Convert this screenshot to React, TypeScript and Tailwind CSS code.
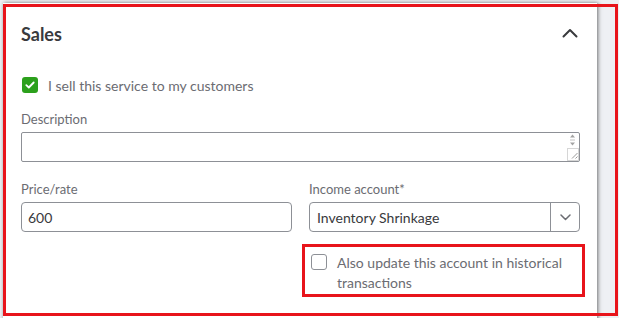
export default function App() {
  return (
    <div className="relative w-[619px] h-[318px] overflow-hidden bg-[#eef0f4] font-['Lato',sans-serif]">
      <div className="ml-[3px] mt-[3px] w-[594px] h-[340px] bg-white shadow-[1px_0_4px_rgba(0,0,0,0.55)] pl-[18px] pr-[17px] pt-[19px]">
        <div className="flex h-[24px] items-center justify-between">
          <span className="text-[18px] font-bold leading-[24px] text-[#393a3d]">Sales</span>
          <svg width="16" height="10" viewBox="0 0 16 10" className="mr-[2px] -mt-[3px]">
            <path d="M1.5 8.5 L8 2 L14.5 8.5" fill="none" stroke="#393a3d" strokeWidth="2" strokeLinecap="round" strokeLinejoin="round" />
          </svg>
        </div>

        <div className="mt-[27px] flex h-[24px] items-center">
          <div className="ml-[1px] flex h-[16px] w-[16px] items-center justify-center rounded-[3px] bg-[#2ca01c]">
            <svg width="10" height="8" viewBox="0 0 10 8">
              <path d="M1.3 4.2 L3.8 6.5 L8.7 1.5" fill="none" stroke="#ffffff" strokeWidth="1.8" strokeLinecap="round" strokeLinejoin="round" />
            </svg>
          </div>
          <span className="ml-[10px] text-[14px] text-[#6b6c72]">I sell this service to my customers</span>
        </div>

        <div className="mt-[14px] text-[13px] leading-[16px] text-[#6b6c72]">Description</div>
        <div className="relative mt-[5px] h-[30px] rounded-[2px] border border-[#8d9096]">
          <svg width="13" height="28" viewBox="0 0 13 28" className="absolute right-0 top-0">
            <path d="M4 4.5 L9 4.5 L6.5 1.5 Z" fill="#a3a3a3" />
            <path d="M4 7 L9 7" stroke="#c4c4c4" strokeWidth="1" />
            <path d="M4 9.5 L9 9.5 L6.5 12.5 Z" fill="#a3a3a3" />
            <rect x="1.5" y="15.5" width="11" height="12" fill="none" stroke="#d6d6d6" strokeWidth="1" />
            <path d="M11.5 20 L6 25.5 M11.5 23.5 L9.5 25.5" stroke="#9a9a9a" strokeWidth="1" />
          </svg>
        </div>

        <div className="mt-[19px] grid grid-cols-2 gap-x-[17px]">
          <div>
            <div className="text-[13px] leading-[16px] text-[#6b6c72]">Price/rate</div>
            <div className="mt-[5px] flex h-[30px] items-center rounded-[4px] border border-[#8d9096] pl-[6px] text-[14px] text-[#393a3d]">
              600
            </div>
          </div>
          <div>
            <div className="text-[13px] leading-[16px] text-[#6b6c72]">Income account*</div>
            <div className="mt-[5px] flex h-[30px] items-center rounded-[4px] border border-[#8d9096] text-[14px] text-[#393a3d]">
              <span className="flex-1 pl-[7px]">Inventory Shrinkage</span>
              <div className="flex h-full w-[29px] items-center justify-center border-l border-[#8d9096]">
                <svg width="11" height="7" viewBox="0 0 11 7">
                  <path d="M1 1 L5.5 5.5 L10 1" fill="none" stroke="#6b6c72" strokeWidth="1.5" strokeLinecap="round" strokeLinejoin="round" />
                </svg>
              </div>
            </div>
            <div className="relative mt-[21px] flex items-start">
              <div className="ml-[2px] mt-[1px] h-[16px] w-[16px] shrink-0 rounded-[3px] border border-[#8d9096] bg-white" />
              <span className="ml-[10px] text-[14px] leading-[20px] text-[#6b6c72]">
                Also update this account in historical transactions
              </span>
              <div className="pointer-events-none absolute -left-[7px] -right-[5px] -top-[9px] -bottom-[4px] border-[3px] border-[#e8141b]" />
            </div>
          </div>
        </div>
      </div>
      <div className="pointer-events-none absolute left-[3px] top-[4px] h-[312px] w-[615px] border-[3px] border-[#e8141b]" />
    </div>
  );
}
